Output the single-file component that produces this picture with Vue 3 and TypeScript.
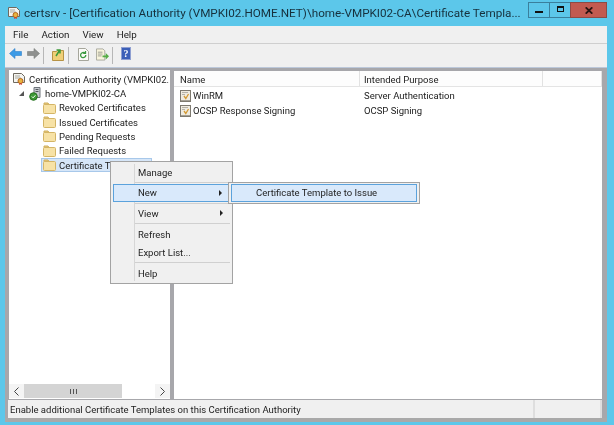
<script setup lang="ts">
interface TreeItem {
  label: string
  selected?: boolean
}

interface TemplateRow {
  name: string
  purpose: string
}

const folders: TreeItem[] = [
  { label: 'Revoked Certificates' },
  { label: 'Issued Certificates' },
  { label: 'Pending Requests' },
  { label: 'Failed Requests' },
  { label: 'Certificate Templates', selected: true },
]

const rows: TemplateRow[] = [
  { name: 'WinRM', purpose: 'Server Authentication' },
  { name: 'OCSP Response Signing', purpose: 'OCSP Signing' },
]

const menus = ['File', 'Action', 'View', 'Help']
</script>

<template>
  <div class="window">
    <header class="titlebar">
      <svg class="app-icon" width="12" height="12" viewBox="0 0 12 12">
        <path d="M.5 .5h8l3 3v6h-11z" fill="#f4f4f0" stroke="#6f6a60" />
        <path d="M2 3h5M2 5h6" stroke="#a9a9a0" />
        <circle cx="7.5" cy="8" r="2.500" fill="#e9b440" stroke="#b5651d" />
        <path d="M6.500 10l-.5 2 1.500-.7 1.500 .7-.5-2" fill="#c7412f" />
      </svg>
      <span class="title">certsrv - [Certification Authority (VMPKI02.HOME.NET)\home-VMPKI02-CA\Certificate Templa...</span>
      <div class="controls">
        <div class="ctl">
          <span class="min"></span>
        </div>
        <div class="ctl">
          <span class="max"></span>
        </div>
        <div class="ctl close">
          <svg width="8" height="7" viewBox="0 0 8 7">
            <path d="M.7 .3l6.600 6.400M7.300 .3L.7 6.700" stroke="#2a1512" stroke-width="1.800" />
          </svg>
        </div>
      </div>
    </header>

    <div class="chrome">
      <nav class="menubar">
        <span v-for="m in menus" :key="m">{{ m }}</span>
      </nav>

      <div class="toolbar">
        <svg class="tool back" width="13" height="11" viewBox="0 0 13 11">
          <path d="M.5 5.500L6 .5v3h6.500v4H6v3z" fill="#3d9be6" stroke="#2f7fc9" stroke-width=".6" />
        </svg>
        <svg class="tool fwd" width="13" height="11" viewBox="0 0 13 11">
          <path d="M12.500 5.500L7 .5v3H.5v4H7v3z" fill="#8f918f" stroke="#7b7d7b" stroke-width=".6" />
        </svg>
        <i class="sep first"></i>
        <svg class="tool up" width="12" height="13" viewBox="0 0 12 13">
          <path d="M.5 3.500h4l1-1h6v10H.5z" fill="#f0cf77" stroke="#b79345" />
          <path d="M4 8l3.500-5.500M4.500 2H8v3.500" fill="none" stroke="#3d9a3a" stroke-width="1.500" />
        </svg>
        <i class="sep"></i>
        <svg class="tool refresh" width="11" height="13" viewBox="0 0 11 13">
          <path d="M.5 .5h7l3 3v9H.5z" fill="#fbfbf8" stroke="#a6a69c" />
          <path d="M7.800 7a2.600 2.600 0 1 1-1-2M7.500 3v2.300H5.200" fill="none" stroke="#3a9a3f" stroke-width="1.300" />
        </svg>
        <svg class="tool export" width="13" height="13" viewBox="0 0 14 13">
          <path d="M.5 .5h7l2 2v10H.5z" fill="#f8f4dc" stroke="#a6a69c" />
          <path d="M2 4h5M2 6h5M2 8h4" stroke="#9a9a90" />
          <path d="M7 7.500h3.500V5L14 8.500 10.500 12V9.500H7z" fill="#56ad45" />
        </svg>
        <i class="sep first"></i>
        <div class="help">?</div>
      </div>

      <div class="panes">
        <aside class="tree">
          <div class="tree-body">
            <div class="node root">
              <svg width="12" height="12" viewBox="0 0 12 12">
                <path d="M.5 .5h8l3 3v6h-11z" fill="#f4f4f0" stroke="#6f6a60" />
                <path d="M2 3h5M2 5h6" stroke="#a9a9a0" />
                <circle cx="7.500" cy="8" r="2.500" fill="#e9b440" stroke="#b5651d" />
                <path d="M6.500 10l-.5 2 1.500-.7 1.500 .7-.5-2" fill="#c7412f" />
              </svg>
              <span>Certification Authority (VMPKI02.</span>
            </div>
            <div class="node ca">
              <span class="expander"></span>
              <svg width="13" height="14" viewBox="0 0 13 14">
                <path d="M5 .5h6v10H5z" fill="#c7cbd0" stroke="#6e747a" />
                <path d="M6.500 2.500h3M6.500 4.500h3" stroke="#50565c" />
                <circle cx="4.500" cy="9.500" r="3.800" fill="#3c9a35" stroke="#26701f" />
                <path d="M2.800 9.500l1.300 1.300 2.300-2.500" fill="none" stroke="#fff" />
              </svg>
              <span>home-VMPKI02-CA</span>
            </div>
            <div
              v-for="f in folders"
              :key="f.label"
              class="node folder"
              :class="{ selected: f.selected }"
            >
              <svg width="13" height="12" viewBox="0 0 13 12">
                <path d="M1 2.500V1h4l1 1.500z" fill="#e8cb7c" stroke="#cfae5c" />
                <rect x=".5" y="2.500" width="12" height="9" rx="1" fill="#f7e2a6" stroke="#d4b566" />
              </svg>
              <span>{{ f.label }}</span>
            </div>
          </div>
          <div class="hscroll">
            <button class="arrow">
              <svg width="5" height="9" viewBox="0 0 5 9">
                <path d="M4.500 .5l-4 4 4 4" fill="none" stroke="#444" />
              </svg>
            </button>
            <div class="track">
              <div class="thumb">
                <svg width="7" height="5" viewBox="0 0 7 5">
                  <path d="M.5 0v5M3.500 0v5M6.500 0v5" stroke="#555" />
                </svg>
              </div>
            </div>
            <button class="arrow">
              <svg width="5" height="9" viewBox="0 0 5 9">
                <path d="M.5 .5l4 4-4 4" fill="none" stroke="#444" />
              </svg>
            </button>
          </div>
        </aside>

        <section class="list">
          <div class="list-head">
            <span class="col-name">Name</span>
            <span class="col-purpose">Intended Purpose</span>
            <span class="col-rest"></span>
          </div>
          <div v-for="r in rows" :key="r.name" class="list-row">
            <span class="col-name cell">
              <svg width="11" height="12" viewBox="0 0 11 12">
                <rect x=".5" y=".5" width="10" height="11" fill="#efebe0" stroke="#7d796f" />
                <path d="M2 2.500h6M2 4.500h3" stroke="#b5b2a8" />
                <path d="M4 6l1.800 2.500L8.500 4" fill="none" stroke="#d39a35" stroke-width="1.300" />
                <path d="M1 10.500h9" stroke="#a39f94" />
              </svg>
              <span>{{ r.name }}</span>
            </span>
            <span class="col-purpose">{{ r.purpose }}</span>
          </div>
        </section>
      </div>

      <footer class="status">
        <span class="status-text">Enable additional Certificate Templates on this Certification Authority</span>
        <i class="status-cell"></i>
        <i class="status-cell last"></i>
      </footer>
    </div>

    <div class="menu">
      <div class="gutter"></div>
      <div class="mi">Manage</div>
      <div class="msep"></div>
      <div class="mi hot">New<b class="tri"></b></div>
      <div class="msep tight"></div>
      <div class="mi">View<b class="tri"></b></div>
      <div class="msep"></div>
      <div class="mi">Refresh</div>
      <div class="mi">Export List...</div>
      <div class="msep"></div>
      <div class="mi">Help</div>
    </div>

    <div class="submenu">
      <div class="sub-item">Certificate Template to Issue</div>
    </div>
  </div>
</template>

<style>
html,
body {
  margin: 0;
  background: #5cc7ea;
}
</style>

<style scoped>
.window {
  position: relative;
  width: 614px;
  height: 425px;
  overflow: hidden;
  background: #5cc7ea;
  font-family: Roboto, "Noto Sans", sans-serif;
  font-size: 9.500px;
  color: #222;
  filter: blur(0.35px);
}

.titlebar {
  display: flex;
  align-items: flex-start;
  height: 26px;
  padding-left: 8px;
  box-sizing: border-box;
}

.app-icon {
  margin: 7px 4px 0 0;
  flex: none;
}

.title {
  flex: 1;
  min-width: 0;
  margin-top: 4px;
  font-size: 11.700px;
  line-height: 18px;
  color: #16303c;
  white-space: nowrap;
  overflow: hidden;
}

.controls {
  display: flex;
  height: 16px;
  margin: 2px 7px 0 0;
  flex: none;
}

.ctl {
  display: flex;
  align-items: center;
  justify-content: center;
  width: 22px;
  height: 16px;
  border: 1px solid #3a7f9c;
  box-sizing: border-box;
  margin-left: -1px;
}

.ctl.close {
  width: 37px;
  background: #c25a50;
  border-color: #8f4a44;
}

.min {
  width: 8px;
  height: 2px;
  margin-top: 3px;
  background: #111;
}

.max {
  width: 5px;
  height: 3px;
  border: 1.500px solid #111;
  border-top-width: 2px;
  margin-top: -2px;
}

.chrome {
  display: flex;
  flex-direction: column;
  height: 396px;
  margin: 0 7px 0 5px;
  background: #a7a7ab;
  border-bottom: 4px solid #a9a9a9;
  box-sizing: border-box;
}

.menubar {
  display: flex;
  gap: 13px;
  align-items: center;
  height: 18px;
  padding-left: 8px;
  font-size: 9.800px;
  background: #f0f0f0;
  border-bottom: 1px solid #cfcfcf;
  box-sizing: border-box;
  flex: none;
}

.toolbar {
  display: flex;
  align-items: flex-start;
  height: 24px;
  padding: 3px 0 0 4px;
  background: #f0f0f0;
  border-bottom: 1px solid #bcc8da;
  box-sizing: border-box;
  flex: none;
}

.tool {
  margin-top: 1px;
  flex: none;
}

.fwd {
  margin-left: 5px;
}

.up {
  margin-left: 8px;
}

.refresh {
  margin-left: 9px;
}

.export {
  margin-left: 7px;
}

.sep {
  width: 1px;
  height: 17px;
  margin-left: 4px;
  background: #b7b7b7;
  flex: none;
}

.sep.first {
  margin-left: 3px;
}

.help {
  display: flex;
  align-items: center;
  justify-content: center;
  width: 10px;
  height: 13px;
  margin-left: 8px;
  box-sizing: border-box;
  background: #3c5fb8;
  color: #fff;
  font: bold 10px "Liberation Serif", serif;
  border: 1px solid #8f9fd1;
}

.panes {
  display: flex;
  flex: 1;
  min-height: 0;
  gap: 4px;
  padding: 2px 5px 1px 4px;
}

.tree {
  display: flex;
  flex-direction: column;
  width: 161px;
  flex: none;
  background: #fff;
}

.tree-body {
  flex: 1;
  padding-top: 1px;
}

.tree svg,
.list svg {
  flex: none;
}

.node {
  display: flex;
  align-items: center;
  height: 14.400px;
  white-space: nowrap;
  overflow: hidden;
}

.root {
  padding-left: 4px;
  gap: 4px;
  height: 16px;
}

.ca {
  padding-left: 10px;
  gap: 3px;
  height: 13.500px;
}

.expander {
  width: 0;
  height: 0;
  border-left: 5px solid transparent;
  border-bottom: 5px solid #555;
  margin-right: 2px;
  flex: none;
}

.folder {
  width: 111px;
  margin-left: 32px;
  padding-left: 1px;
  gap: 3px;
  border: 1px solid transparent;
  box-sizing: border-box;
}

.selected {
  background: #d6e6f8;
  border-color: #a8c8ea;
}

.hscroll {
  display: flex;
  height: 14px;
  margin-bottom: 1px;
  flex: none;
  background: #f2f2f2;
}

.arrow {
  display: flex;
  align-items: center;
  justify-content: center;
  width: 15px;
  height: 14px;
  padding: 0;
  border: none;
  background: #f4f4f4;
}

.track {
  flex: 1;
  background: #fff;
}

.thumb {
  display: flex;
  align-items: center;
  justify-content: center;
  width: 98px;
  height: 14px;
  background: #d4d4d4;
}

.list {
  flex: 1;
  margin-top: 1px;
  background: #fff;
}

.list-head {
  display: flex;
  height: 16px;
  line-height: 17px;
  background: #fdfdfd;
  border-bottom: 1px solid #e4e4e4;
  box-sizing: border-box;
  margin-bottom: 1px;
}

.list-head span {
  border-right: 1px solid #e2e2e2;
}

.col-name {
  width: 186px;
  padding-left: 6px;
  box-sizing: border-box;
  flex: none;
}

.col-purpose {
  width: 183px;
  padding-left: 4px;
  box-sizing: border-box;
  flex: none;
}

.col-rest {
  flex: 1;
}

.list-row {
  display: flex;
  align-items: center;
  height: 15px;
}

.cell {
  display: flex;
  align-items: center;
  gap: 2px;
}

.status {
  display: flex;
  height: 18px;
  line-height: 20px;
  margin: 0 5px 0 3px;
  flex: none;
  background: #f0f0f0;
  overflow: hidden;
}

.status-text {
  flex: 1;
  padding-left: 2px;
  color: #1c1c1c;
}

.status-cell {
  width: 65px;
  border-left: 2px solid #dedede;
}

.status-cell.last {
  width: 0;
}

.menu {
  position: absolute;
  left: 110px;
  top: 161px;
  width: 123px;
  padding: 1px 2px;
  box-sizing: border-box;
  background: #f0f0f0;
  border: 1px solid #a3a3a3;
  display: flex;
  flex-direction: column;
}

.gutter {
  position: absolute;
  left: 23px;
  top: 2px;
  bottom: 2px;
  width: 1px;
  background: #d6d6d6;
}

.mi {
  position: relative;
  height: 18px;
  line-height: 20px;
  padding-left: 25px;
  box-sizing: border-box;
}

.hot {
  line-height: 16px;
  background: #d9e9fb;
  border: 1px solid #5ba2dc;
  padding-left: 24px;
}

.msep {
  height: 1px;
  margin: 1px 0 1px 22px;
  background: #d0d0d0;
}

.msep.tight {
  margin-bottom: 0;
}

.tri {
  position: absolute;
  right: 7px;
  top: 50%;
  margin-top: -3px;
  border-left: 3px solid #222;
  border-top: 3px solid transparent;
  border-bottom: 3px solid transparent;
}

.submenu {
  position: absolute;
  left: 228px;
  top: 182px;
  width: 192px;
  height: 22px;
  padding: 1px 2px;
  box-sizing: border-box;
  background: #f0f0f0;
  border: 1px solid #a3a3a3;
}

.sub-item {
  height: 18px;
  line-height: 16px;
  padding-left: 24px;
  background: #d9e9fb;
  border: 1px solid #5ba2dc;
  box-sizing: border-box;
}
</style>
